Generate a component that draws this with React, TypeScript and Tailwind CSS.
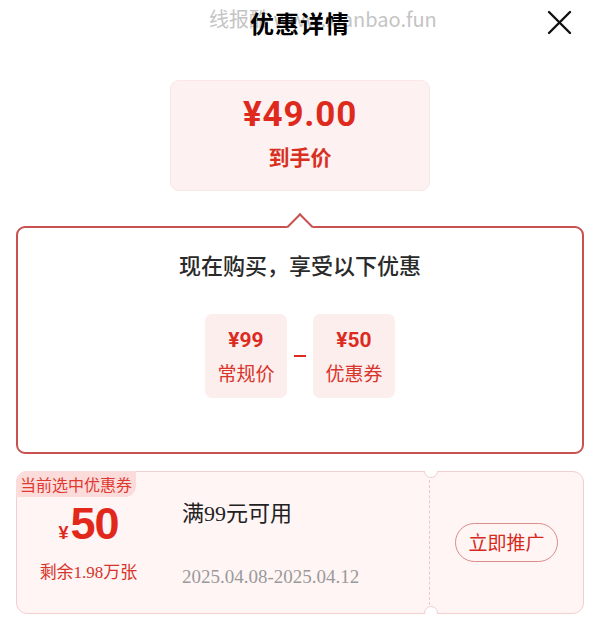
import React from "react";

const cjk = { fontFamily: '"Noto Sans CJK SC", "Noto Sans", sans-serif' };
const num = { fontFamily: 'Roboto, "Noto Sans CJK SC", sans-serif' };
const serifMix = { fontFamily: '"Liberation Serif", "Noto Sans CJK SC", serif' };

export default function App() {
  return (
    <div className="relative w-[600px] h-[627px] bg-white overflow-hidden" style={cjk}>
      {/* Header */}
      <div className="relative h-[46px] grid grid-cols-[1fr_auto_1fr] items-center">
        <div />
        <div className="relative">
          <span
            className="absolute left-[-41px] top-[-4px] whitespace-nowrap text-[20px] leading-[30px] text-[#c4c4c4]"
            style={{ fontFamily: '"Noto Sans CJK SC", "Liberation Sans", sans-serif' }}
          >
            线报酷 www.xianbao.fun
          </span>
          <h1 className="relative text-[24px] leading-[30px] font-bold text-black tracking-[1px]">
            优惠详情
          </h1>
        </div>
        <div className="flex justify-end pr-[28px]">
          <svg width="26" height="26" viewBox="0 0 26 26" fill="none">
            <path d="M3 2 L24 23 M24 2 L3 23" stroke="#111" strokeWidth="2.4" strokeLinecap="round" />
          </svg>
        </div>
      </div>

      {/* Final price box */}
      <div className="mx-auto mt-[34px] w-[260px] h-[111px] rounded-[9px] bg-[#fdf1f1] border border-[#fae6e6] flex flex-col items-center">
        <div className="mt-[12px] text-[35px] leading-[44px] font-bold text-[#dd2a1c] tracking-[0.8px]" style={num}>
          ¥49.00
        </div>
        <div className="mt-[4px] text-[21px] leading-[30px] font-bold text-[#d8301f]">到手价</div>
      </div>

      {/* Main detail box */}
      <div className="relative mx-4 mt-[35px] h-[228px] rounded-[9px] border-2 border-[#c9514f] flex flex-col items-center">
        <div className="absolute left-1/2 top-[-11px] -translate-x-1/2 w-[19px] h-[19px] rotate-45 bg-white border-l-2 border-t-2 border-[#c9514f]" />
        <div className="mt-[21px] text-[22px] leading-[30px] font-medium text-[#2a2a2a]">
          现在购买，享受以下优惠
        </div>
        <div className="mt-[35px] flex items-center">
          <div className="w-[82px] h-[84px] rounded-[7px] bg-[#fdeeee] flex flex-col items-center justify-center">
            <div className="text-[21px] leading-[26px] font-bold text-[#dc2b1e]" style={num}>¥99</div>
            <div className="mt-[8px] text-[19px] leading-[24px] text-[#d9352a]">常规价</div>
          </div>
          <div className="w-[26px] flex justify-center">
            <div className="w-[12px] h-[2px] bg-[#dc2b1e]" />
          </div>
          <div className="w-[82px] h-[84px] rounded-[7px] bg-[#fdeeee] flex flex-col items-center justify-center">
            <div className="text-[21px] leading-[26px] font-bold text-[#dc2b1e]" style={num}>¥50</div>
            <div className="mt-[8px] text-[19px] leading-[24px] text-[#d9352a]">优惠券</div>
          </div>
        </div>
      </div>

      {/* Coupon */}
      <div className="relative mx-4 mt-[17px] h-[143px] rounded-[11px] border border-[#f2cfcf] bg-[#fff5f4] flex">
        <div className="absolute left-[-1px] top-[-1px] h-[26px] px-[4px] rounded-tl-[11px] rounded-br-[11px] bg-[#fcdcdb] text-[16px] leading-[26px] text-[#df3a30]">
          当前选中优惠券
        </div>
        {/* notches */}
        <div className="absolute left-[406px] top-[-1px] w-[16px] h-[8px] overflow-hidden">
          <div className="absolute left-[1px] top-[-7px] w-[14px] h-[14px] rounded-full bg-white border border-[#f2cfcf]" />
        </div>
        <div className="absolute left-[406px] bottom-[-1px] w-[16px] h-[8px] overflow-hidden">
          <div className="absolute left-[1px] top-[0px] w-[14px] h-[14px] rounded-full bg-white border border-[#f2cfcf]" />
        </div>

        <div className="w-[143px] flex flex-col items-center pt-[30px]">
          <div className="flex items-baseline text-[#e2281b] font-bold" style={{ fontFamily: '"Liberation Sans", Arial, sans-serif' }}>
            <span className="text-[18px] leading-none mr-[2px]">¥</span>
            <span className="text-[45px] leading-[44px] tracking-[-1px]">50</span>
          </div>
          <div className="mt-[15px] text-[17px] leading-[24px] text-[#d6342a]" style={serifMix}>
            剩余1.98万张
          </div>
        </div>

        <div className="flex-1 pl-[22px] pt-[27px]">
          <div className="text-[22px] leading-[30px] text-[#222]" style={serifMix}>满99元可用</div>
          <div className="mt-[35px] text-[19px] leading-[26px] text-[#9a9a9a]" style={serifMix}>
            2025.04.08-2025.04.12
          </div>
        </div>

        <div className="my-[8px] w-0 border-l border-dashed border-[#efc6c6]" />

        <div className="w-[153px] flex items-center justify-center">
          <div className="w-[103px] h-[39px] rounded-full border border-[#d98d8b] flex items-center justify-center text-[19px] text-[#d6281c]">
            立即推广
          </div>
        </div>
      </div>
    </div>
  );
}
